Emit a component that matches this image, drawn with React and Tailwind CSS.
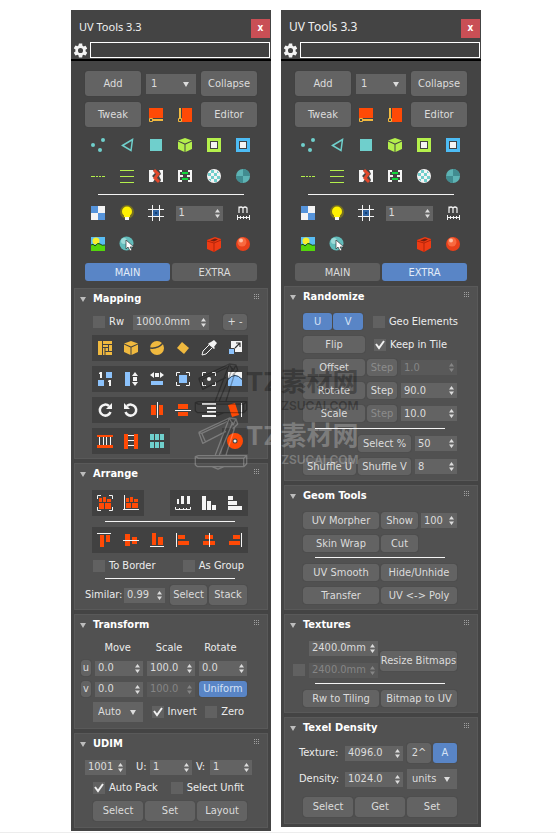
import React, { useState } from 'react';
import clsx from 'clsx';

const O = '#ff4a06';
const Y = '#f0b93f';
const B = '#8cc2fb';
const W = '#f4f4f4';
const T = '#6fcfcc';
const L = '#b4f04c';

// every icon is drawn on a 16 x 16 grid
const icons = {
  edgeH: <><path fill={O} d="M1 1h14v10H1z" /><path stroke={Y} strokeWidth="2" d="M4 13h11" /><path fill="#444" stroke={Y} d="M1.5 11.5h3v3h-3z" /></>,
  edgeV: <><path fill={O} d="M5 1h10v14H5z" /><path stroke={Y} strokeWidth="2" d="M3 1v11" /><path fill="#444" stroke={Y} d="M1.5 11.5h3v3h-3z" /></>,
  verts: <g fill={T}><circle cx="13" cy="3" r="2" /><circle cx="3" cy="8" r="2" /><circle cx="10" cy="13" r="2" /></g>,
  tri: <path fill="none" stroke={T} strokeWidth="1.5" d="M3.500 8.500 13.500 2.500 12 13.500z" />,
  face: <path fill={T} d="M2 2h12v12H2z" />,
  cube: <><path fill={L} d="m8 1 7 2.500-7 3-7-3z" /><path fill={L} d="M1 4.500 7.500 7.500V15L1 12z" /><path fill={L} d="m15 4.500-6.500 3V15L15 12z" /></>,
  frameL: <><path fill="none" stroke={L} strokeWidth="3" d="M2.500 2.500h11v11h-11z" /><path fill={W} d="M5 5h6v6H5z" /></>,
  frameB: <><path fill="none" stroke="#4dbcf5" strokeWidth="3" d="M2.500 2.500h11v11h-11z" /><path fill={W} d="M5 5h6v6H5z" /></>,
  dash: <path stroke={L} d="M1 8.500h4M6 8.500h2M9 8.500h2M12 8.500h3" />,
  lines: <path stroke={L} d="M1 2.500h14M1 8.500h14M1 14.500h14" />,
  split: <><path fill={W} d="M1 2h4l2 3-3 3 3 3-2 3H1zM15 2h-4l2 4-2 2 2 4-1 2h3z" /><path fill="none" stroke="#e2482a" strokeWidth="3" d="m6 2 4 4-3 4 4 4" /></>,
  stitch: <><path fill={W} d="M1 2h4v2H3v8h2v2H1zM15 2h-4v2h2v8h-2v2h4z" /><path fill={W} d="M3 7h3v2H3zM10 7h3v2h-3z" /><path fill="#13d83d" d="M5 4h6v2H5zM5 10h6v2H5z" /></>,
  checkBall: <><circle cx="8" cy="8" r="7" fill={W} /><path fill={T} d="M5 2h3v3H5zM11 2.500l2 2.500h-2zM2 5h3v3H2zM8 5h3v3H8zM5 8h3v3H5zM11 8h3v3h-3zM2.500 11H5v2.500zM8 11h3v3H8z" /></>,
  ball: <><circle cx="8" cy="8" r="7" fill="#5db3b4" /><path fill="#418c90" d="M8 1a7 7 0 0 1 7 7H8zM8 8v7a7 7 0 0 1-7-7z" /></>,
  checker: <><path fill={W} d="M1 1h14v14H1z" /><path fill="#5694db" d="M1 1h7v7H1zM8 8h7v7H8z" /></>,
  bulb: <><circle cx="8" cy="7" r="7" fill="#8b8210" opacity=".7" /><circle cx="8" cy="6.500" r="5" fill="#fff200" /><path fill="#fff200" d="M5 9h6v3H5z" /><path fill={W} d="M6 12h4v3H6z" /></>,
  grid: <><path fill="#2f64a3" d="M5 5h6v6H5z" /><path fill="#173f70" d="M7 7h2v2H7z" /><path stroke={W} d="M4.500 0v16M11.500 0v16M0 4.500h16M0 11.500h16" /></>,
  meter: <><path fill="none" stroke={W} strokeWidth="1.200" d="M4 8V1.500M4 3q2-2 4 0v5M8 3q2-2 4 0v5" /><path stroke={W} d="M2 12.500h12M2.500 10v5M5.500 11v3M8.500 11v3M11.500 11v3M14.500 10v5" /></>,
  image: <><path fill="#59bdf4" d="M1 1h14v14H1z" /><circle cx="6" cy="5" r="3.500" fill="#f7ef2e" /><path fill="#54d60c" d="M1 9q2-2 4 1 3-4 5-2t5 1v6H1z" /><path fill="none" stroke="#164a12" d="M1 9q2-2 4 1 3-4 5-2t5 1" /></>,
  pick: <><circle cx="7.500" cy="7.500" r="7" fill="#62bcbb" /><circle cx="5" cy="5" r="3" fill="#b8e8e6" opacity=".7" /><path fill="#fff" stroke="#333" strokeWidth=".7" d="m7 4 8 7h-4l2 3-2 1-2-4-2 2z" /></>,
  box3d: <><path fill="#ee3b14" d="m1 4 8-3 6 2v9l-7 4-7-3z" /><path fill="#75200f" d="m4 4.500 5-2 3 1-4 2z" /><path fill="none" stroke="#b52408" d="m1 5 7 2v9M8 7l7-3" /></>,
  ball3d: <><circle cx="8" cy="8" r="7" fill="#e8401a" /><circle cx="7" cy="6" r="4.500" fill="#ff7a50" opacity=".7" /><circle cx="6" cy="4.500" r="2" fill="#ffc0a5" /></>,
  flat: <path fill={Y} d="M1 1h4v14H1zM6 1h9v3H6zM6 5h5v2H6zM12 5h3v6h-3zM6 8h1.500v7H6zM8.500 8H11v3H8.500zM8.500 12H15v3H8.500z" />,
  cubeY: <g fill={Y}><path d="m8 1 7 2.500-7 3-7-3z" /><path d="M1 4.500 7.500 7.500V15L1 12z" /><path d="m15 4.500-6.500 3V15L15 12z" /></g>,
  sphereY: <><circle cx="8" cy="8" r="7" fill={Y} /><path fill="none" stroke="#414141" strokeWidth="1.500" d="M1 8q8 1 13-5" /></>,
  diamond: <path fill={Y} d="m7 2 7 6-5 6-7-6z" />,
  dropper: <><path fill={W} d="m10 2 3-2 3 3-3 4 1 1-1 1-6-5 1-1z" /><path fill="none" stroke={W} d="m8 5-6 6-1 4 4-1 6-6" /></>,
  scaleUp: <><path fill={W} d="M4 1h11v11H4z" /><path fill={B} stroke="#414141" d="M1.500 8.500h6v6h-6z" /><path fill="none" stroke="#333" strokeWidth="1.200" d="m8 8 5-5M9 3h4v4" /></>,
  oneToOne: <><path fill={W} d="M3 1h2v6H3V3H2V2zM12 9h2v6h-2v-4h-1v-1z" /><path fill={B} d="M9 1h6v6H9zM1 9h6v6H1z" /></>,
  fitV: <><path fill={B} d="M2 1h5v14H2z" /><path fill={W} d="m12 1 3 4H9zM10 6h4v4h-4zM9 11h6l-3 4z" /></>,
  fitH: <><path fill={W} d="m1 4 4-3v6zM6 2h4v4H6zM11 1l4 3-4 3z" /><path fill={B} d="M2 10h12v4H2z" /></>,
  fitBox: <><path fill={B} d="M4 4h8v8H4z" /><path fill="none" stroke={W} d="M1.500 5V1.500H5M11 1.500h3.500V5M14.500 11v3.500H11M5 14.500H1.500V11" /></>,
  fitDot: <><circle cx="8" cy="8" r="2" fill={W} /><path fill="none" stroke={W} d="M1.500 5V1.500H5M11 1.500h3.500V5M14.500 11v3.500H11M5 14.500H1.500V11" /></>,
  arc: <><path fill={W} d="M1 1h14v6H1z" /><path fill={B} d="M1 15V8q7-8 14 0v7z" /><path fill="none" stroke="#345" d="M1 8.500q7-8 14 0" /></>,
  rotR: <><path fill="none" stroke={W} strokeWidth="2.500" d="M12 4a5.500 5.500 0 1 0 1.500 6" /><path fill={W} d="M15 1v6H9z" /></>,
  rotL: <><path fill="none" stroke={W} strokeWidth="2.500" d="M4 4a5.500 5.500 0 1 1-1.500 6" /><path fill={W} d="M1 1v6h6z" /></>,
  flipH: <><path fill={O} d="M2 3h5v10H2zM10 3h4v10h-4z" /><path stroke={W} d="M8.500 0v16" /></>,
  flipV: <><path fill={O} d="M3 2h10v5H3zM3 10h10v4H3z" /><path stroke={W} d="M0 8.500h16" /></>,
  align: <path fill={W} d="M1 1h14v2H1zM6 5h9v2H6zM6 9h9v2H6zM1 13h14v2H1z" />,
  lean: <><path fill={O} d="m1 3 7-2 4 12-7 2z" /><path stroke={W} d="M14.500 1v14" /></>,
  colsO: <><path fill={O} d="M0 2h16v2H0zM0 12h16v3H0z" /><path stroke={W} d="M2.500 4v8M6.500 4v8M9.500 4v8M13.500 4v8" /></>,
  rowsO: <><path fill={O} d="M1 1h4v15H1zM11 1h4v15h-4z" /><path stroke={W} d="M5 2.500h6M5 7.500h6M5 12.500h6" /></>,
  tiles: <path fill={T} d="M1 1h4v6H1zM6 1h4v6H6zM11 1h4v6h-4zM1 9h4v6H1zM6 9h4v6H6zM11 9h4v6h-4z" />,
  disc: <><circle cx="8" cy="8" r="8" fill={O} /><circle cx="8" cy="8" r="2.500" fill="#414141" /><circle cx="8" cy="8" r="1.500" fill={W} /></>,
  pack: <><path fill={O} d="M2 3h3v4H2zM6 2h3v5H6zM10 4h4v3h-4zM2 8h5v6H2zM8 8h6v6H8z" /><path fill="none" stroke={W} d="M.500 4V.500H4M12 .500h3.500V4M15.500 12v3.500H12M4 15.500H.500V12" /></>,
  packL: <><path fill={O} d="M3 3h3v4H3zM7 2h3v5H7zM11 4h4v3h-4zM3 8h5v5H3zM9 8h6v5H9z" /><path fill="none" stroke={W} d="M1.500 0v15M0 14.500h16" /></>,
  ruler: <><path fill={W} d="M2 4h2v5H2zM6 1h3v8H6zM12 1h3v8h-3z" /><path fill="none" stroke={W} d="M.500 12v2.500h15V12M4.500 13v2M8.500 13v2M11.500 13v2" /></>,
  barsV: <path fill={W} d="M1 1h4v14H1zM6 6h4v9H6zM11 10h4v5h-4z" />,
  barsH: <path fill={W} d="M1 1h5v4H1zM1 6h9v4H1zM1 11h14v4H1z" />,
  alTop: <><path fill={O} d="M3 3h4v12H3zM9 3h4v7H9z" /><path stroke={W} d="M0 1.500h14" /></>,
  alMid: <><path fill={O} d="M2 2h5v12H2zM9 5h5v7H9z" /><path stroke={W} d="M0 8.500h16" /></>,
  alBot: <><path fill={O} d="M3 1h4v12H3zM9 5h5v8H9z" /><path stroke={W} d="M1 14.500h14" /></>,
  alLeft: <><path fill={O} d="M3 3h7v4H3zM3 9h11v4H3z" /><path stroke={W} d="M1.500 1v14" /></>,
  alCen: <><path fill={O} d="M4 3h8v4H4zM2 9h12v4H2z" /><path stroke={W} d="M8.500 1v14" /></>,
  alRight: <><path fill={O} d="M6 3h7v4H6zM2 9h11v4H2z" /><path stroke={W} d="M14.500 1v14" /></>,
};

const Icon = ({ name }) => (
  <button aria-label={name} className="flex h-full w-full items-center justify-center">
    <svg viewBox="0 0 16 16" className="h-4 w-4">{icons[name]}</svg>
  </button>
);

const Strip = ({ names, className }) => (
  <div className={clsx('flex h-[26px] bg-[#414141]', className)}>
    {names.map((name) => <Icon key={name} name={name} />)}
  </div>
);

const Btn = ({ children, className, active, dim }) => (
  <button
    className={clsx(
      'flex items-center justify-center overflow-hidden rounded-[3px] whitespace-nowrap shadow-[0_0_1px_#333]',
      active ? 'bg-[#5985c6] text-[#d5e2f5]' : 'bg-[#636363]',
      dim ? 'text-[#8c8c8c]' : !active && 'text-[#dcdcdc]',
      className
    )}
  >
    {children}
  </button>
);

const Spin = ({ value, label, className, disabled }) => (
  <div
    className={clsx(
      'flex h-[15px] min-w-0 items-center px-[3px]',
      disabled ? 'bg-[#595959] text-[#858585]' : 'bg-[#636363] text-[#dcdcdc]',
      className
    )}
  >
    <input aria-label={label} defaultValue={value} disabled={disabled} className="w-full min-w-0 bg-transparent outline-none" />
    <svg viewBox="0 0 5 9" className="h-[9px] w-[5px] shrink-0" fill="currentColor">
      <path d="M2.500 0 5 3.500H0zM0 5.500h5L2.500 9z" />
    </svg>
  </div>
);

const Check = ({ label, checked, className }) => (
  <label className={clsx('flex items-center gap-1 whitespace-nowrap text-[#ececec]', className)}>
    <span className="relative h-3 w-3 shrink-0">
      <input
        type="checkbox"
        aria-label={label || 'Lock height'}
        defaultChecked={checked}
        className="peer block h-3 w-3 appearance-none bg-[#616161]"
      />
      <svg viewBox="0 0 12 12" className="pointer-events-none absolute inset-0 hidden h-3 w-3 peer-checked:block">
        <path d="m2 5 3 4 5-7" fill="none" stroke="#f0f0f0" strokeWidth="2" />
      </svg>
    </span>
    {label}
  </label>
);

const Drop = ({ value, label, className }) => (
  <div className={clsx('relative h-5 bg-[#636363] text-[#dcdcdc]', className)}>
    <select aria-label={label} className="h-full w-full appearance-none bg-transparent pl-[5px] outline-none">
      <option>{value}</option>
    </select>
    <svg viewBox="0 0 6 5" className="pointer-events-none absolute top-2 right-[7px] h-[5px] w-[6px]">
      <path d="M0 0h6L3 5z" fill="#dcdcdc" />
    </svg>
  </div>
);

const Line = ({ className }) => <div className={clsx('mx-[13px] h-px bg-[#f4f4f4]', className)} />;

const Section = ({ title, children, className }) => (
  <section className={clsx('mx-[3px] border border-[#595959] bg-[#515151]', className)}>
    <h2 className="flex h-5 items-center pr-[7px] pl-[5px] font-bold text-white">
      <svg viewBox="0 0 6 5" className="mr-[7px] h-[5px] w-[6px]">
        <path d="M0 0h6L3 5z" fill="#bdbdbd" />
      </svg>
      {title}
      <svg viewBox="0 0 6 6" className="mb-1 ml-auto h-[6px] w-[6px]">
        <path d="M0 .500h6M0 2.500h6M0 4.500h6" stroke="#a0a0a0" strokeDasharray="1 1" />
      </svg>
    </h2>
    <div className="pr-[19px] pl-[17px]">{children}</div>
  </section>
);

const Main = () => (
  <>
    <Section title="Mapping" className="pb-1">
      <div className="mt-[5px] flex h-4 items-center px-[1px]">
        <Check label="Rw" className="w-10" />
        <Spin value="1000.0mm" label="Real world size" className="w-[76px]" />
        <Btn className="ml-auto h-4 w-6">+ -</Btn>
      </div>
      <div className="mt-[5px] flex flex-col gap-[5px]">
        <Strip names={['flat', 'cubeY', 'sphereY', 'diamond', 'dropper', 'scaleUp']} />
        <Strip names={['oneToOne', 'fitV', 'fitH', 'fitBox', 'fitDot', 'arc']} />
        <Strip names={['rotR', 'rotL', 'flipH', 'flipV', 'align', 'lean']} />
        <div className="flex justify-between">
          <Strip names={['colsO', 'rowsO', 'tiles']} className="w-1/2" />
          <Strip names={['disc']} className="w-1/6" />
        </div>
      </div>
    </Section>

    <Section title="Arrange" className="mt-1 pb-1">
      <div className="mt-[6px] flex justify-between">
        <Strip names={['pack', 'packL']} className="w-1/3" />
        <Strip names={['ruler', 'barsV', 'barsH']} className="w-1/2" />
      </div>
      <Line className="mt-[5px]" />
      <Strip names={['alTop', 'alMid', 'alBot', 'alLeft', 'alCen', 'alRight']} className="mt-[5px]" />
      <div className="mt-[5px] flex h-4 items-center justify-between pr-1 pl-[1px]">
        <Check label="To Border" />
        <Check label="As Group" />
      </div>
      <Line className="mt-1" />
      <div className="mt-[6px] -ml-[7px] flex h-5 items-center pr-[1px]">
        <span className="w-[39px] text-[#ececec]">Similar:</span>
        <Spin value="0.99" label="Similar" className="w-[41px]" />
        <Btn className="ml-[5px] h-5 w-[37px]">Select</Btn>
        <Btn className="ml-[2px] h-5 flex-1">Stack</Btn>
      </div>
    </Section>

    <Section title="Transform" className="mt-1 pb-[6px]">
      <div className="mt-[5px] grid h-4 grid-cols-3 items-center pr-[2px] text-center text-[#ececec]">
        <span>Move</span><span>Scale</span><span>Rotate</span>
      </div>
      <div className="mt-1 -ml-[11px] grid h-4 grid-cols-[10px_1fr_1fr_1fr] items-center gap-1 pr-[1px]">
        <Btn className="h-4">u</Btn>
        <Spin value="0.0" label="Move U" />
        <Spin value="100.0" label="Scale U" />
        <Spin value="0.0" label="Rotate" />
      </div>
      <div className="mt-[5px] -ml-[11px] grid h-4 grid-cols-[10px_1fr_1fr_1fr] items-center gap-1 pr-[1px]">
        <Btn className="h-4">v</Btn>
        <Spin value="0.0" label="Move V" />
        <Spin value="100.0" label="Scale V" disabled />
        <Btn active className="h-4">Uniform</Btn>
      </div>
      <div className="mt-[5px] flex h-5 items-center justify-between pr-1 pl-[1px]">
        <Drop value="Auto" label="Mode" className="w-[50px]" />
        <Check label="Invert" checked />
        <Check label="Zero" />
      </div>
    </Section>

    <Section title="UDIM" className="mt-1 pb-[6px]">
      <div className="mt-[5px] -mr-1 -ml-[7px] flex h-4 items-center text-[#ececec]">
        <Spin value="1001" label="Tile" className="w-[41px]" />
        <span className="w-6 pl-[10px]">U:</span>
        <Spin value="1" label="U" className="w-[42px]" />
        <span className="w-[18px] pl-1">V:</span>
        <Spin value="1" label="V" className="flex-1" />
      </div>
      <div className="mt-[5px] flex h-4 items-center justify-between pr-1 pl-[1px]">
        <Check label="Auto Pack" checked />
        <Check label="Select Unfit" />
      </div>
      <div className="mt-[5px] grid h-5 grid-cols-3 gap-[2px] px-[1px]">
        <Btn>Select</Btn><Btn>Set</Btn><Btn>Layout</Btn>
      </div>
    </Section>
  </>
);

const steps = [
  { label: 'Offset', value: '1.0', dim: true, disabled: true },
  { label: 'Rotate', value: '90.0' },
  { label: 'Scale', value: '10.0', dim: true },
];

const Extra = () => (
  <>
    <Section title="Randomize" className="pb-[5px]">
      <div className="mt-[6px] flex h-[17px] items-center gap-px pl-[1px]">
        <Btn active className="h-full w-[30px]">U</Btn>
        <Btn active className="h-full w-[30px]">V</Btn>
        <Check label="Geo Elements" className="ml-[9px]" />
      </div>
      <div className="mt-[6px] flex h-[17px] items-center pl-[1px]">
        <Btn className="h-full w-[62px]">Flip</Btn>
        <Check label="Keep in Tile" checked className="ml-[9px]" />
      </div>
      {steps.map((s) => (
        <div key={s.label} className="mt-[6px] flex h-[17px] items-center px-[1px]">
          <Btn className="h-full w-[62px]">{s.label}</Btn>
          <Btn dim={s.dim} className="ml-[2px] h-full w-[30px]">Step</Btn>
          <Spin value={s.value} label={s.label} disabled={s.disabled} className="ml-1 flex-1" />
        </div>
      ))}
      <Line className="mt-[6px]" />
      <div className="mt-[6px] flex h-[17px] items-center justify-end gap-1 px-[1px]">
        <Btn className="h-full w-[53px]">Select %</Btn>
        <Spin value="50" label="Select percent" className="w-[42px]" />
      </div>
      <div className="mt-[6px] flex h-[17px] items-center px-[1px]">
        <Btn className="h-full w-[53px]">Shuffle U</Btn>
        <Btn className="ml-[2px] h-full w-[53px]">Shuffle V</Btn>
        <Spin value="8" label="Shuffle" className="ml-1 flex-1" />
      </div>
    </Section>

    <Section title="Geom Tools" className="mt-1 pb-[5px]">
      <div className="mt-[6px] grid grid-cols-2 gap-x-[2px] gap-y-[6px] px-[1px]">
        <Btn className="h-[17px]">UV Morpher</Btn>
        <div className="flex items-center gap-[3px]">
          <Btn className="h-[17px] w-[37px]">Show</Btn>
          <Spin value="100" label="Show percent" className="flex-1" />
        </div>
        <Btn className="h-[17px]">Skin Wrap</Btn>
        <Btn className="h-[17px] w-[37px]">Cut</Btn>
      </div>
      <Line className="mt-[5px]" />
      <div className="mt-[6px] grid grid-cols-2 gap-x-[2px] gap-y-[6px] px-[1px]">
        <Btn className="h-[17px]">UV Smooth</Btn>
        <Btn className="h-[17px]">Hide/Unhide</Btn>
        <Btn className="h-[17px]">Transfer</Btn>
        <Btn className="h-[17px]">UV &lt;-&gt; Poly</Btn>
      </div>
    </Section>

    <Section title="Textures" className="mt-1 pb-[5px]">
      <div className="mt-[5px] -ml-[9px] flex items-end justify-between pr-[1px]">
        <div className="flex flex-col gap-[6px]">
          <div className="flex h-4 items-center pl-4">
            <Spin value="2400.0mm" label="Width" className="w-[69px]" />
          </div>
          <div className="flex h-4 items-center gap-1">
            <Check />
            <Spin value="2400.0mm" label="Height" disabled className="w-[69px]" />
          </div>
        </div>
        <Btn className="mb-[7px] h-5 w-[77px]">Resize Bitmaps</Btn>
      </div>
      <Line className="mt-[5px]" />
      <div className="mt-[6px] grid h-[17px] grid-cols-2 gap-[2px] px-[1px]">
        <Btn>Rw to Tiling</Btn>
        <Btn>Bitmap to UV</Btn>
      </div>
    </Section>

    <Section title="Texel Density" className="mt-1 pb-[6px]">
      <div className="mt-[5px] -ml-[3px] flex h-5 items-center pr-[1px]">
        <span className="w-[46px] text-[#ececec]">Texture:</span>
        <Spin value="4096.0" label="Texture" className="w-[58px]" />
        <Btn className="ml-1 h-5 flex-1">2^</Btn>
        <Btn active className="ml-[2px] h-5 flex-1">A</Btn>
      </div>
      <div className="mt-[6px] -ml-[3px] flex h-5 items-center pr-[1px]">
        <span className="w-[46px] text-[#ececec]">Density:</span>
        <Spin value="1024.0" label="Density" className="w-[58px]" />
        <Drop value="units" label="Units" className="ml-1 flex-1" />
      </div>
      <div className="mt-2 grid h-5 grid-cols-3 gap-[2px] px-[1px]">
        <Btn>Select</Btn><Btn>Get</Btn><Btn>Set</Btn>
      </div>
    </Section>
  </>
);

const rowA = ['verts', 'tri', 'face', 'cube', 'frameL', 'frameB'];
const rowB = ['dash', 'lines', 'split', 'stitch', 'checkBall', 'ball'];

const ToolWindow = ({ initialTab, titleClass }) => {
  const [tab, setTab] = useState(initialTab);

  return (
    <main className="min-w-0 self-start bg-[#444444] pb-[3px]">
      <header className="flex h-7 items-end pr-[1px] pl-2">
        <h1 className={clsx("flex h-5 flex-1 items-center pb-[3px] font-['Noto_Sans',sans-serif] text-[#f0f0f0]", titleClass)}>UV Tools 3.3</h1>
        <button aria-label="Close" className="flex h-[19px] w-[19px] items-center justify-center bg-[#c94f55] pb-[2px] text-[10px] font-bold text-white">x</button>
      </header>

      <div className="mt-1 flex h-4 items-center gap-[1px] pr-[1px] pl-[1px]">
        <svg viewBox="0 0 24 24" className="h-[17px] w-[17px] shrink-0" fill="#f4f4f4">
          <path d="M19.140 12.940c.040-.300.060-.610.060-.940s-.020-.640-.070-.940l2.030-1.580a.49.49 0 0 0 .120-.610l-1.920-3.320a.49.49 0 0 0-.590-.220l-2.390.960a7 7 0 0 0-1.620-.940l-.360-2.540A.48.48 0 0 0 13.920 2h-3.840a.48.48 0 0 0-.470.410l-.360 2.540a7 7 0 0 0-1.620.940l-2.390-.960a.49.49 0 0 0-.590.220L2.740 8.470a.48.48 0 0 0 .120.610l2.030 1.580a6 6 0 0 0 0 2.680l-2.030 1.580a.49.49 0 0 0-.120.610l1.920 3.320c.120.220.370.290.590.220l2.390-.960c.500.380 1.030.700 1.620.940l.360 2.540c.050.240.240.410.480.410h3.840c.240 0 .440-.170.470-.410l.360-2.540a7 7 0 0 0 1.620-.940l2.390.960c.220.080.470 0 .590-.220l1.920-3.320a.48.48 0 0 0-.120-.610zM12 15.600a3.600 3.600 0 1 1 0-7.200 3.600 3.600 0 0 1 0 7.200" />
        </svg>
        <input aria-label="Status" className="h-4 min-w-0 flex-1 border border-white bg-[#414141] outline-none" />
      </div>
      <div className="mt-px h-[2px] bg-black" />

      <div className="px-[13px] pt-[7px]">
        <div className="grid h-[31px] grid-cols-3 items-center">
          <Btn className="mx-px h-[25px]">Add</Btn>
          <Drop value="1" label="Map channel" className="mx-1" />
          <Btn className="mx-px h-[25px]">Collapse</Btn>
        </div>
        <div className="grid h-[31px] grid-cols-3 items-center">
          <Btn className="mx-px h-[25px]">Tweak</Btn>
          <div className="flex h-[30px] pr-px"><Icon name="edgeH" /><Icon name="edgeV" /></div>
          <Btn className="mx-px h-[25px]">Editor</Btn>
        </div>
        <div className="grid h-[30px] grid-cols-6 pr-px">{rowA.map((n) => <Icon key={n} name={n} />)}</div>
        <div className="mt-px grid h-[30px] grid-cols-6 pr-px">{rowB.map((n) => <Icon key={n} name={n} />)}</div>
        <div className="mx-[14px] mt-[3px] h-px bg-[#f4f4f4]" />
        <div className="mt-[3px] grid h-[30px] grid-cols-6 items-center pr-px">
          <Icon name="checker" />
          <Icon name="bulb" />
          <Icon name="grid" />
          <Spin value="1" label="Tiling" className="col-span-2 mx-[5px]" />
          <Icon name="meter" />
        </div>
        <div className="mt-px grid h-[30px] grid-cols-6 pr-px">
          <Icon name="image" />
          <Icon name="pick" />
          <span className="col-span-2" />
          <Icon name="box3d" />
          <Icon name="ball3d" />
        </div>
        <div className="mt-1 grid grid-cols-2 gap-[2px] px-[1px]">
          {['MAIN', 'EXTRA'].map((name) => (
            <button
              key={name}
              onClick={() => setTab(name)}
              className={clsx('h-[18px] rounded-[3px] pt-px', tab === name ? 'bg-[#5985c6] text-[#e3ecf8]' : 'bg-[#5e5e5e] text-[#dcdcdc]')}
            >
              {name}
            </button>
          ))}
        </div>
      </div>

      {tab === 'MAIN' ? <div className="mt-[7px]"><Main /></div> : <div className="mt-[5px]"><Extra /></div>}
    </main>
  );
};

// crane mark followed by the site name
const Watermark = ({ className }) => (
  <div className={clsx('pointer-events-none absolute left-[194px] flex items-start', className)}>
    <svg viewBox="0 0 54 54" className="h-[54px] w-[54px]" fill="none" stroke="currentColor" strokeWidth="1.300" strokeLinejoin="round">
      <path d="M4.700 16.300 35.300 2l6.700 1 1.700 5-5 5M4.700 16.300l4 11L32 15.300M4.700 16.300l3 1 4 9M7.700 17.300 33 5.500M35.300 2 39 9 42 3M35 3 21.300 39M38.700 6 25.300 39M41.300 9.700 32 39" />
      <path d="m1.300 40.700 3-1h48.400v8l-3 3H3.500l-2.200-2zM1.300 40.700l3 1.500h45.400l3-2.500M49.700 42.200v8.500M18 50.700l6 2.500 6-2.500" />
    </svg>
    <div className="-ml-[2px] flex flex-col items-end pt-1">
      <span className="font-[Inter,'Noto_Sans_CJK_SC',sans-serif] text-[26px] leading-8 font-bold whitespace-nowrap">TZ素材网</span>
      <span className="font-[Inter,sans-serif] text-[12px] leading-4 font-semibold">TZSUCAI.COM</span>
    </div>
  </div>
);

export default function App() {
  return (
    <div className="relative border-b border-[#ededed] bg-white pt-[10px] pr-[75px] pb-[1px] pl-[71px] font-['DejaVu_Sans_Condensed','Noto_Sans',sans-serif] text-[11px] leading-[14px]">
      <div className="grid grid-cols-[1fr_10px_1fr]">
        <ToolWindow initialTab="MAIN" titleClass="text-[11px]" />
        <div className="relative z-20 bg-white" />
        <ToolWindow initialTab="EXTRA" titleClass="text-[12px]" />
      </div>
      <Watermark className="top-[362px] z-10 text-black/30" />
      <Watermark className="top-[416px] z-10 text-white/25" />
    </div>
  );
}
